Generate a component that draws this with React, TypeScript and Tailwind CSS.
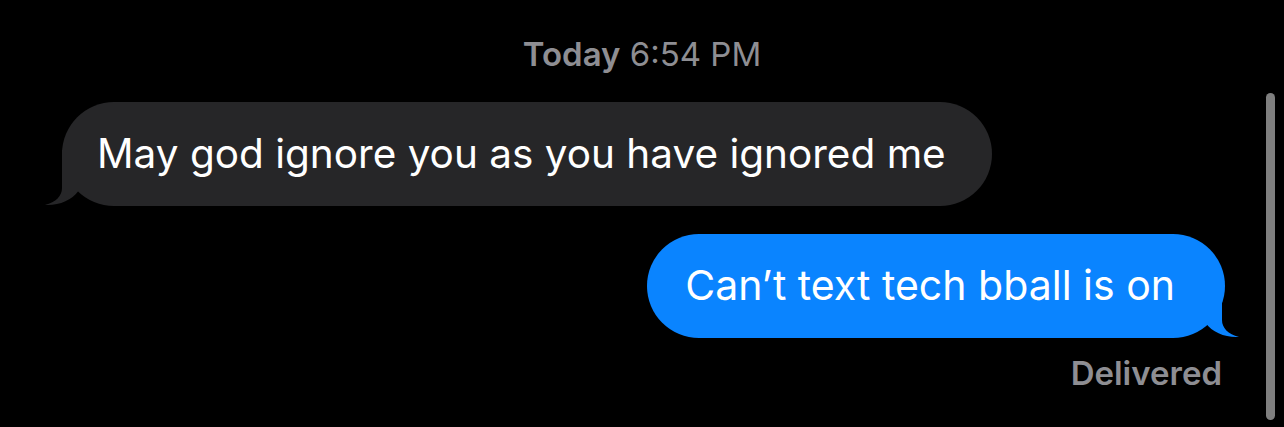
import React from "react";

const font = { fontFamily: "Inter, 'Noto Sans', sans-serif" };

// Small curled tail drawn under the bottom corner of a bubble
function Tail({ color, flip }: { color: string; flip?: boolean }) {
  return (
    <svg
      width="57"
      height="57"
      viewBox="0 0 57 57"
      className={
        flip
          ? "absolute -right-[15px] -bottom-[1px] -scale-x-100"
          : "absolute -left-[18px] -bottom-[1px]"
      }
    >
      <path
        d="M18 0 L18 38 C18 46 12 52 1 55 C14 56 28 50 34 41.5 L34 0 Z"
        fill={color}
      />
    </svg>
  );
}

export default function App() {
  return (
    <div className="relative h-[427px] w-full overflow-hidden bg-black" style={font}>
      <div className="flex flex-col pt-[36px]">
        <div className="text-center text-[33px] leading-[36px] text-[#8e8e93]">
          <span className="font-semibold">Today</span> 6:54 PM
        </div>

        <div className="mt-[30px] pl-[62px]">
          <div className="relative inline-flex h-[104px] items-center rounded-full bg-[#262628] pl-[35px] pr-[46px]">
            <Tail color="#262628" />
            <span className="relative text-[40.5px] text-white">
              May god ignore you as you have ignored me
            </span>
          </div>
        </div>

        <div className="mt-[28px] flex justify-end pr-[59px]">
          <div className="relative inline-flex h-[104px] items-center rounded-full bg-[#0a84ff] pl-[38px] pr-[50px]">
            <Tail color="#0a84ff" flip />
            <span className="relative text-[41px] text-white">Can’t text tech bball is on</span>
          </div>
        </div>

        <div className="mt-[18px] flex justify-end pr-[62px]">
          <span className="text-[33px] font-semibold leading-[34px] text-[#8e8e93]">Delivered</span>
        </div>
      </div>

      <div className="absolute left-[1266px] top-[93px] h-[327px] w-[9px] rounded-full bg-[#7f7f7f]" />
    </div>
  );
}
